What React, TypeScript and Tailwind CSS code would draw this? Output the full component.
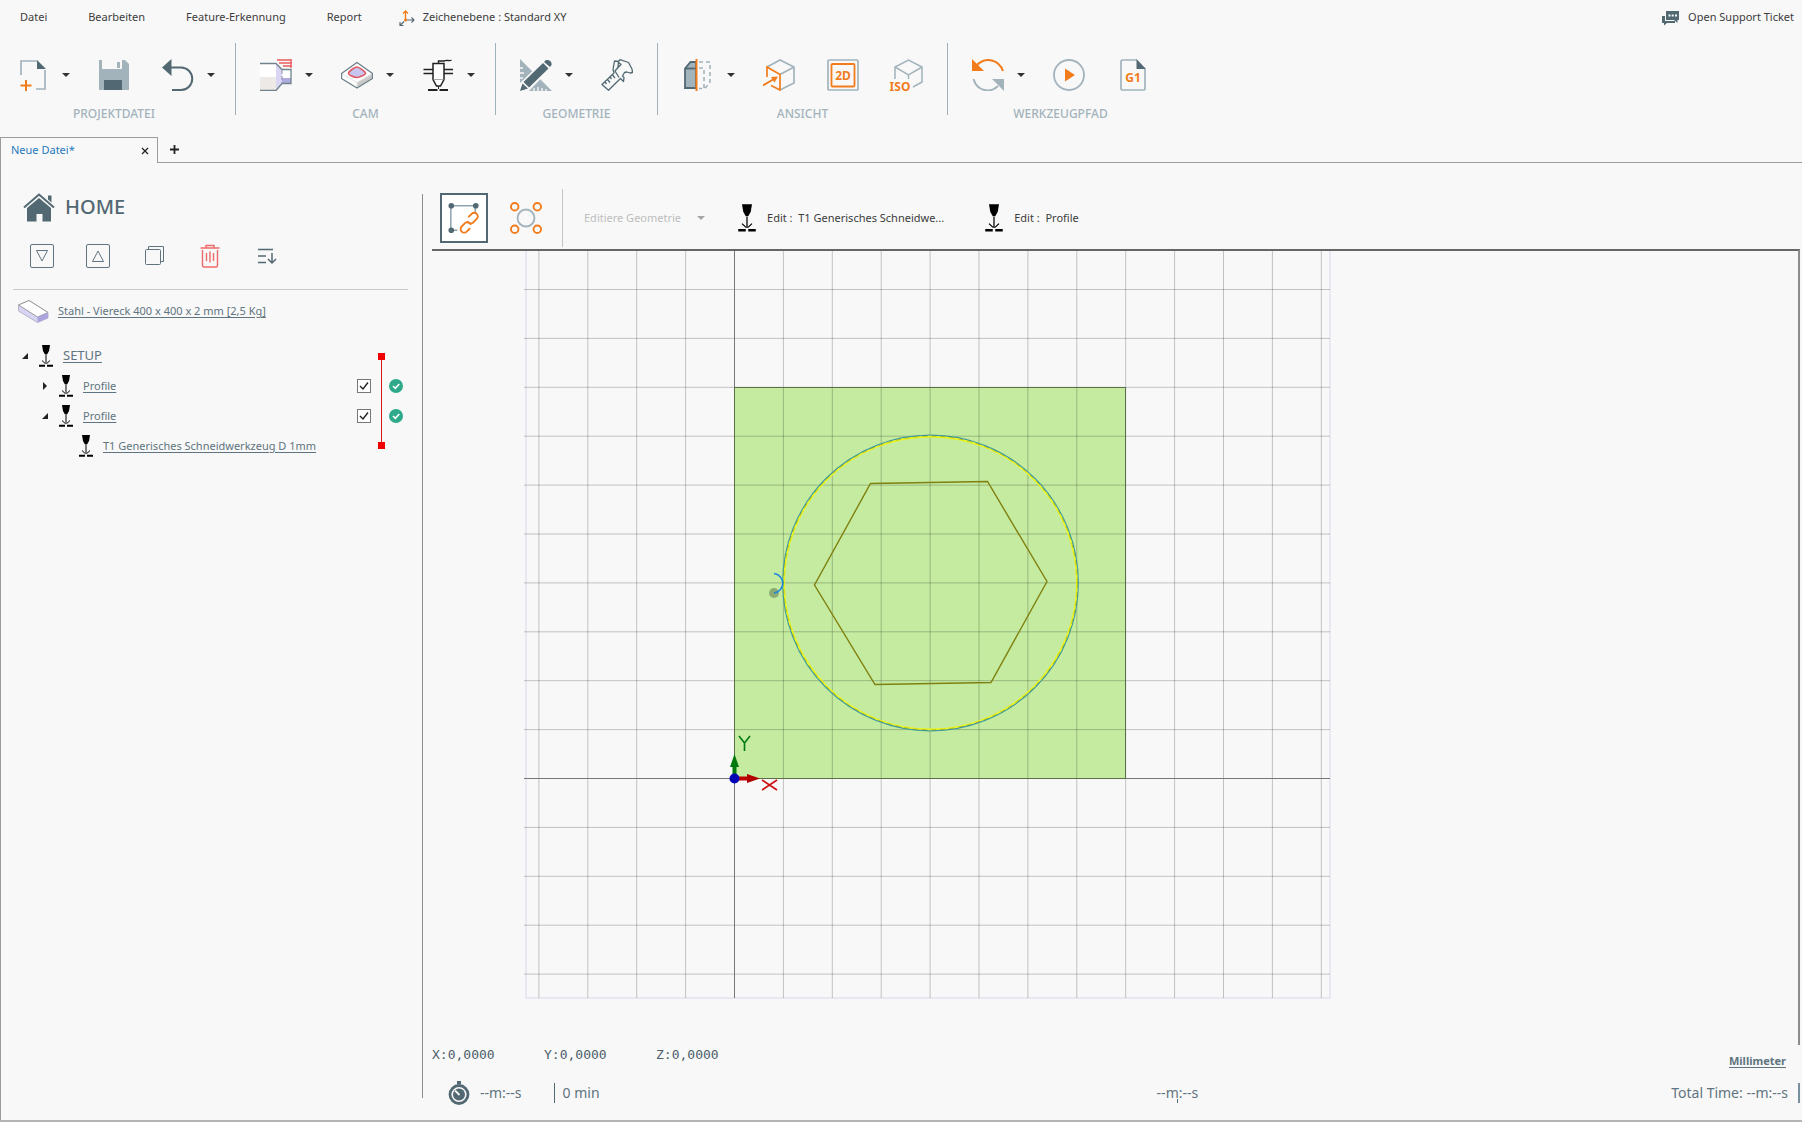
import React, { useState } from "react";

interface IconProps {
  className?: string;
}

const NewFileIcon = () => (
  <svg viewBox="0 0 32 32" className="w-8 h-8" fill="none">
    <path d="M4 16V2h16M28 11v19h-9" stroke="#a3b3bc" strokeWidth="1.7" />
    <path d="M20 1l9 9h-9z" fill="#526872" />
    <path d="M9 21v11M3.500 26.500h11" stroke="#f27c1c" strokeWidth="2" />
  </svg>
);

const SaveIcon = () => (
  <svg viewBox="0 0 32 32" className="w-8 h-8">
    <path d="M1 1h3v9h20V1h3l4 4v26H1z" fill="#a3b3bc" />
    <path d="M19 3h3v6h-3z" fill="#a3b3bc" />
    <path d="M6 21h18v10H6z" fill="#526872" />
  </svg>
);

const UndoIcon = () => (
  <svg viewBox="0 0 32 32" className="w-8 h-8" fill="none">
    <path d="M9 8.500h10a11 11 0 0 1 0 22.500h-9" stroke="#526872" strokeWidth="2" />
    <path d="M0 8.500L9.500 0v17z" fill="#526872" />
  </svg>
);

const TurnedPartIcon = () => (
  <svg viewBox="0 0 32 32" className="w-8 h-8" fill="none">
    <path d="M0 5h16v13H0z" fill="#fff" />
    <path d="M0 18h16v13H0z" fill="#ece9e6" />
    <path d="M16 5l6 6v13l-6 7z" fill="#d9d5f3" />
    <path d="M22 11h9v9h-9z" fill="#fff" />
    <path d="M22 19h9v6h-9z" fill="#aeaae0" />
    <path d="M0 4.500h16l6 6h9v14h-9l-6 7H0" stroke="#70828c" strokeWidth="1.300" />
    <path d="M22 11v14" stroke="#8c8fb5" strokeDasharray="4 2" />
    <path d="M17 1h15M19 4h13M23 7h9M31 1v8" stroke="#e8585c" strokeWidth="1.300" />
  </svg>
);

const PocketIcon = () => (
  <svg viewBox="0 0 32 32" className="w-8 h-8" fill="none" strokeLinejoin="round">
    <path d="M16 3.500l15.500 11v5L16 29 .500 19.500v-5z" fill="#fff" />
    <path d="M31 15v4.500L16 28.500v-5z" fill="#c9c9c9" />
    <path d="M16 23.500v5M.500 14.500l15.500 9 15.500-9" stroke="#e2e2e2" />
    <path d="M16 3.500l15.500 11v5L16 29 .500 19.500v-5z" stroke="#70828c" strokeWidth="1.400" />
    <path d="M16 8c2 0 8 4.500 8.500 6s-6 4.500-8.500 4.500S7 16 7.500 14 14 8 16 8z" fill="#c8c5ee" stroke="#e05a64" strokeWidth="1.600" />
  </svg>
);

const LaserHeadIcon = () => (
  <svg viewBox="0 0 32 32" className="w-8 h-8" fill="none" stroke="#222">
    <path d="M11 4.500h11v16L18.500 27h-4L11 20.500z" fill="#fff" strokeWidth="1.500" />
    <path d="M11.500 20.500h10" stroke="#aaa" />
    <path d="M16.500 4.500V2h6c3-2 4 1 7-1" strokeWidth="1.400" />
    <path d="M1.500 10.500H11M1.500 14.500H11M22 10.500h9M22 14.500h9" strokeWidth="1.300" />
    <path d="M6 31h9.500M17.500 31H26" strokeWidth="2" />
    <path d="M16.500 27v3" />
  </svg>
);

const DrawIcon = () => (
  <svg viewBox="0 0 32 32" className="w-8 h-8">
    <path d="M0 0l32 32H0z" fill="#a3b3bc" />
    <path d="M0 9h3M0 14h4M0 19h3M14 32v-3M18 32v-4M22 32v-3M26 32v-2" stroke="#f8f8f8" strokeWidth="1.300" />
    <path d="M25 0h7v8L9 32H0v-8z" fill="#f8f8f8" />
    <path d="M23 4l5.500 5.500L9 28.500 3.500 23z" fill="#526872" />
    <path d="M24.500 2.500c2-3 8-1 7 3.500l-1.500 2L24 3z" fill="#526872" />
    <path d="M2.500 24.500l5.500 5L0 32z" fill="#526872" />
  </svg>
);

const CaliperIcon = () => (
  <svg viewBox="0 0 32 32" className="w-8 h-8" fill="none" stroke="#526872" strokeWidth="1.300" strokeLinejoin="round">
    <path d="M1 25.500L13 14l-1-3.500L13.500 2l4 .500-.500 6 3-3-3-2.500L19 .700l8.500 2.800 3.500 6.500.500 3.500-2.500.500-3-1-2.500.500-2 3.500 1.500 1.500-.500 4-3-3L7.500 31.300z" />
    <path d="M17 8.500L14 12l4 6.500M4 23l1.500 2M6.500 20.500l2.500 3M9 18l1.500 2M11.500 16l2.500 3" />
  </svg>
);

const SectionIcon = () => (
  <svg viewBox="0 0 32 32" className="w-8 h-8" fill="none">
    <path d="M3 9.500L8.500 3H14v26H3z" fill="#a3b3bc" stroke="#526872" strokeWidth="1.800" />
    <path d="M3 9.500h11" stroke="#526872" strokeWidth="1.800" />
    <path d="M17 3h11v20l-5 6.500h-6M17 9h5v20" stroke="#a3b3bc" strokeWidth="1.600" strokeDasharray="4 3" />
    <path d="M14.500 0v32" stroke="#f27c1c" strokeWidth="2" />
  </svg>
);

const FrontViewIcon = () => (
  <svg viewBox="0 0 32 32" className="w-8 h-8" fill="none" strokeWidth="1.700">
    <path d="M4 8l13-7 14 7v16L17 31M17 15.500L31 8" stroke="#a3b3bc" />
    <path d="M4 18V8l13 7.500V31L8 26.500" stroke="#f27c1c" />
    <path d="M0 26.500L11 20" stroke="#f27c1c" strokeWidth="2" />
    <path d="M8 18l7-.500-3.500 6z" fill="#f27c1c" />
  </svg>
);

const View2DIcon = () => (
  <svg viewBox="0 0 32 32" className="w-8 h-8" fill="none">
    <rect x="1" y="1" width="30" height="30" rx="1" stroke="#a3b3bc" strokeWidth="1.700" />
    <rect x="4.500" y="5" width="23" height="22.500" rx="1" stroke="#f27c1c" strokeWidth="1.800" />
    <text x="16" y="20.500" textAnchor="middle" fontSize="12" fontWeight="700" fill="#f27c1c">2D</text>
  </svg>
);

const IsoIcon = () => (
  <svg viewBox="0 0 32 32" className="w-8 h-8 overflow-visible" fill="none">
    <path d="M4 20V8l13.500-7L31 8v15l-9 5M4 8l13.500 8L31 8M17.500 16v4" stroke="#a3b3bc" strokeWidth="1.500" />
    <text x="9" y="32" textAnchor="middle" fontSize="12" fontWeight="700" fill="#f27c1c">ISO</text>
  </svg>
);

const RefreshIcon = () => (
  <svg viewBox="0 0 32 32" className="w-8 h-8" fill="none">
    <path d="M5 6c9-9 22-5 26 6" stroke="#f27c1c" strokeWidth="2" />
    <path d="M0 0l12 12H0z" fill="#f27c1c" />
    <path d="M1.500 20C5 32 18 35 26 27" stroke="#a3b3bc" strokeWidth="2" />
    <path d="M32 20v12L20 20z" fill="#a3b3bc" />
  </svg>
);

const PlayIcon = () => (
  <svg viewBox="0 0 32 32" className="w-8 h-8">
    <circle cx="16" cy="16" r="15" fill="none" stroke="#a3b3bc" strokeWidth="1.800" />
    <path d="M12 9.500l10 6.500-10 6.500z" fill="#f27c1c" />
  </svg>
);

const GCodeIcon = () => (
  <svg viewBox="0 0 32 32" className="w-8 h-8" fill="none">
    <path d="M20 1H5.500a1.500 1.500 0 0 0-1.500 1.500v27A1.500 1.500 0 0 0 5.500 31h21a1.500 1.500 0 0 0 1.500-1.500V10" stroke="#a3b3bc" strokeWidth="1.700" />
    <path d="M19.500 0L29 10h-9.500z" fill="#526872" />
    <text x="16" y="23" textAnchor="middle" fontSize="12" fontWeight="700" fill="#f27c1c">G1</text>
  </svg>
);

const PlaneIcon = () => (
  <svg viewBox="0 0 16 16" className="w-4 h-4" fill="none">
    <path d="M6.500 10V1M4 3.500L6.500 1 9 3.500" stroke="#f27c1c" strokeWidth="1.400" />
    <path d="M7.500 10H15M12.500 7.500L15 10l-2.500 2.500M5 11.500L1 15.500M1 12v3.500h3.500" stroke="#526872" strokeWidth="1.100" />
    <circle cx="6.500" cy="10" r="1.500" fill="#f27c1c" />
  </svg>
);

const ChatIcon = () => (
  <svg viewBox="0 0 18 16" className="w-[18px] h-4">
    <path d="M0 6h3v5h10v2H5l-3 2.500V13H0z" fill="#526872" />
    <path d="M4 1h13v9h-1.500v3L12 10H4z" fill="#526872" />
    <path d="M6.500 4.500h2v2h-2zM9.700 4.500h2v2h-2zM13 4.500h2v2h-2z" fill="#f8f8f8" />
  </svg>
);

const HomeIcon = () => (
  <svg viewBox="0 0 32 29" className="w-8 h-[29px]">
    <path d="M16 5l12 10v13.500h-8.500V21h-6v7.500H4V15z" fill="#526872" />
    <path d="M1 14.500L16 1.500l15 13" fill="none" stroke="#526872" strokeWidth="2" />
    <path d="M25 2.500h3.500v7L25 6.500z" fill="#526872" />
  </svg>
);

const ToolIcon = ({ className = "w-4 h-[22px]" }: IconProps) => (
  <svg viewBox="0 0 16 22" className={className} fill="none" stroke="#000">
    <path d="M4 0h8l-1 6-2 3.500H7L5 6z" fill="#000" stroke="none" />
    <path d="M8 10v9M7.200 18.500L4 15.500M8.800 18.500l3.200-3" strokeWidth="1" />
    <path d="M1 20.800h6M9 20.800h6" strokeWidth="2" />
  </svg>
);

const SheetIcon = () => (
  <svg viewBox="0 0 32 24" className="w-8 h-6" strokeLinejoin="round">
    <path d="M1.500 6L12 1.500 31 13.500v5.500l-10.500 4.500L1.500 12z" fill="#d8d5f4" stroke="#b5b4cc" />
    <path d="M1.500 6L12 1.500 31 13.500 20.500 18z" fill="#fff" stroke="#999" />
    <path d="M20.500 18L31 13.500V19l-10.500 4.500z" fill="#aaa6dd" />
  </svg>
);

const OutlineSelectIcon = () => (
  <svg viewBox="0 0 34 34" className="w-8 h-8" fill="none">
    <path d="M3 30V4h26v7M3 30h7" stroke="#8ea3ae" strokeWidth="1.600" />
    <circle cx="3.500" cy="4" r="3" fill="#526872" />
    <circle cx="29.500" cy="4" r="3" fill="#526872" />
    <circle cx="3.500" cy="30" r="3" fill="#526872" />
    <g stroke="#f27c1c" strokeWidth="2" strokeLinecap="round">
      <path d="M21 21a4 4 0 0 0 5.500 1l4-4a3.800 3.800 0 0 0-5.400-5.400l-3 3" />
      <path d="M24 23.500a4 4 0 0 0-5.500-1.500l-4 4a3.800 3.800 0 0 0 5.400 5.400l3-3" />
    </g>
  </svg>
);

const PatternIcon = () => (
  <svg viewBox="0 0 34 34" className="w-8 h-8" fill="none" strokeWidth="2">
    <circle cx="17" cy="17" r="9" stroke="#a3b3bc" />
    <g stroke="#f27c1c">
      <circle cx="5" cy="5" r="4" />
      <circle cx="29" cy="5" r="4" />
      <circle cx="5" cy="29" r="4" />
      <circle cx="29" cy="29" r="4" />
    </g>
  </svg>
);

const StopwatchIcon = () => (
  <svg viewBox="0 0 22 24" className="w-[22px] h-6" fill="none">
    <path d="M9 0h4v3H9z" fill="#526872" />
    <circle cx="11" cy="13.500" r="9" stroke="#526872" strokeWidth="2.800" />
    <circle cx="11" cy="13.500" r="6" fill="#526872" />
    <path d="M7 9.500l4.500 4.500" stroke="#f8f8f8" strokeWidth="1.800" />
  </svg>
);

const Caret = ({ className = "text-[#333]" }: IconProps) => (
  <svg viewBox="0 0 8 4" className={`w-2 h-1 ${className}`}>
    <path d="M0 0h8L4 4z" fill="currentColor" />
  </svg>
);

interface Tool {
  name: string;
  icon: React.ReactNode;
  menu?: boolean;
}

interface ToolGroup {
  title: string;
  tools: Tool[];
}

const toolGroups: ToolGroup[] = [
  {
    title: "PROJEKTDATEI",
    tools: [
      { name: "Neu", icon: <NewFileIcon />, menu: true },
      { name: "Speichern", icon: <SaveIcon /> },
      { name: "Rückgängig", icon: <UndoIcon />, menu: true },
    ],
  },
  {
    title: "CAM",
    tools: [
      { name: "Drehen", icon: <TurnedPartIcon />, menu: true },
      { name: "Fräsen", icon: <PocketIcon />, menu: true },
      { name: "Schneiden", icon: <LaserHeadIcon />, menu: true },
    ],
  },
  {
    title: "GEOMETRIE",
    tools: [
      { name: "Zeichnen", icon: <DrawIcon />, menu: true },
      { name: "Messen", icon: <CaliperIcon /> },
    ],
  },
  {
    title: "ANSICHT",
    tools: [
      { name: "Schnitt", icon: <SectionIcon />, menu: true },
      { name: "Vorderansicht", icon: <FrontViewIcon /> },
      { name: "2D-Ansicht", icon: <View2DIcon /> },
      { name: "ISO-Ansicht", icon: <IsoIcon /> },
    ],
  },
  {
    title: "WERKZEUGPFAD",
    tools: [
      { name: "Neu berechnen", icon: <RefreshIcon />, menu: true },
      { name: "Simulation", icon: <PlayIcon /> },
      { name: "G-Code", icon: <GCodeIcon /> },
    ],
  },
];

const MenuBar = () => (
  <nav className="flex items-center gap-px h-[35px] pr-2 text-[11px] text-[#3c3c3c]">
    {["Datei", "Bearbeiten", "Feature-Erkennung", "Report"].map((item) => (
      <button key={item} type="button" className="px-5">{item}</button>
    ))}
    <button type="button" className="flex items-center gap-2 pl-4">
      <PlaneIcon />
      Zeichenebene : Standard XY
    </button>
    <a href="#support" className="flex items-center gap-2 ml-auto">
      <ChatIcon />
      Open Support Ticket
    </a>
  </nav>
);

const Ribbon = () => (
  <div className="flex pl-px pt-2 h-[102px]">
    {toolGroups.map((group, i) => (
      <React.Fragment key={group.title}>
        {i > 0 && <div className="w-px h-[72px] mx-2 bg-[#9fb1bb]" />}
        <section className="flex flex-col items-center">
          <div className="flex h-[63px] items-center">
            {group.tools.map((tool) => (
              <div key={tool.name} className="flex items-center">
                <button type="button" aria-label={tool.name} className={tool.menu ? "pl-4" : "px-4"}>
                  {tool.icon}
                </button>
                {tool.menu && (
                  <button type="button" aria-label={`${tool.name} Menü`} className="mx-2 w-[17px] h-8 flex items-center justify-center">
                    <Caret />
                  </button>
                )}
              </div>
            ))}
          </div>
          <h2 className="text-xs leading-4 text-[#a3b3bc] font-medium">{group.title}</h2>
        </section>
      </React.Fragment>
    ))}
  </div>
);

const TabStrip = () => (
  <div className="flex h-[26px]">
    <div className="flex items-center justify-between w-[158px] pl-2.5 pr-2 border-t border-r border-l border-[#9c9c9c] text-[11px]">
      <button type="button" className="text-[#1f78bd]">Neue Datei*</button>
      <button type="button" aria-label="Schließen" className="text-[#222]">
        <svg viewBox="0 0 8 8" className="w-2 h-2"><path d="M1 1l6 6M7 1L1 7" stroke="currentColor" strokeWidth="1.300" /></svg>
      </button>
    </div>
    <div className="flex-1 flex items-center pl-3 border-b border-[#9c9c9c]">
      <button type="button" aria-label="Neuer Tab" className="text-[#222]">
        <svg viewBox="0 0 9 9" className="w-[9px] h-[9px]"><path d="M4.500 0v9M0 4.500h9" stroke="currentColor" strokeWidth="1.800" /></svg>
      </button>
    </div>
  </div>
);

interface TreeRow {
  id: string;
  label: string;
  level: number;
  open?: boolean;
  checkable?: boolean;
}

const rows: TreeRow[] = [
  { id: "setup", label: "SETUP", level: 0, open: true },
  { id: "profile-1", label: "Profile", level: 1, open: false, checkable: true },
  { id: "profile-2", label: "Profile", level: 1, open: true, checkable: true },
  { id: "tool-1", label: "T1 Generisches Schneidwerkzeug D 1mm", level: 2 },
];

const indents = ["pl-5", "pl-10", "pl-[60px]"];

const Tree = () => {
  const [checked, setChecked] = useState<Record<string, boolean>>({ "profile-1": true, "profile-2": true });

  return (
    <div className="relative mt-[18px]">
      <ul className="text-[11px] text-[#5f7480]">
        {rows.map((row) => (
          <li key={row.id} className={`flex items-center h-[30px] pr-[5px] ${indents[row.level]}`}>
            <span className="w-[17px] shrink-0">
              {row.open !== undefined && (
                <button type="button" aria-label={row.open ? "Zuklappen" : "Aufklappen"} className="block">
                  <svg viewBox="0 0 8 8" className="w-2 h-2">
                    <path d={row.open ? "M7 1v6H1z" : "M2 0l4 4-4 4z"} fill="#222" />
                  </svg>
                </button>
              )}
            </span>
            <ToolIcon />
            <a href={`#${row.id}`} className={`ml-[9px] underline underline-offset-2 ${row.level === 0 ? "text-[13px]" : ""}`}>
              {row.label}
            </a>
            {row.checkable && (
              <span className="ml-auto flex items-center">
                <input
                  type="checkbox"
                  id={`${row.id}-active`}
                  aria-label={row.label}
                  checked={checked[row.id]}
                  onChange={(e) => setChecked({ ...checked, [row.id]: e.target.checked })}
                  className="peer appearance-none w-3.5 h-3.5 border border-[#777] bg-white"
                />
                <svg viewBox="0 0 14 14" className="w-3.5 h-3.5 -ml-3.5 pointer-events-none invisible peer-checked:visible">
                  <path d="M3 7l3 3 5-6.500" fill="none" stroke="#222" strokeWidth="1.400" />
                </svg>
                <svg viewBox="0 0 14 14" className="w-3.5 h-3.5 ml-[18px]">
                  <circle cx="7" cy="7" r="7" fill="#2eaa8b" />
                  <path d="M4 7l2.300 2.300L10.300 5" fill="none" stroke="#fff" strokeWidth="1.600" />
                </svg>
              </span>
            )}
          </li>
        ))}
      </ul>
      <div className="absolute right-[23px] top-3 bottom-3 w-[7px] flex flex-col items-center">
        <span className="w-[7px] h-[7px] bg-[#f00000]" />
        <span className="w-px flex-1 bg-[#d81818]" />
        <span className="w-[7px] h-[7px] bg-[#f00000]" />
      </div>
    </div>
  );
};

const Sidebar = () => (
  <aside className="w-[422px] shrink-0 pt-7 pr-[14px] border-l border-[#9c9c9c]">
    <div className="flex items-center gap-2.5 pl-[22px] h-8">
      <HomeIcon />
      <h1 className="text-xl leading-7 font-medium text-[#526872]">HOME</h1>
    </div>

    <div className="flex items-center gap-8 pl-[29px] mt-[21px]">
      <button type="button" aria-label="Alle zuklappen">
        <svg viewBox="0 0 24 24" className="w-6 h-6" fill="none" stroke="#60747f">
          <rect x=".500" y=".500" width="23" height="23" rx="1.500" />
          <path d="M6.500 6.500h11L12 17z" />
        </svg>
      </button>
      <button type="button" aria-label="Alle aufklappen">
        <svg viewBox="0 0 24 24" className="w-6 h-6" fill="none" stroke="#60747f">
          <rect x=".500" y=".500" width="23" height="23" rx="1.500" />
          <path d="M6.500 17.500h11L12 7z" />
        </svg>
      </button>
      <button type="button" aria-label="Kopieren">
        <svg viewBox="0 0 24 24" className="w-6 h-6" fill="none" stroke="#60747f">
          <rect x="3.500" y="5.500" width="15" height="15" rx="1" />
          <path d="M6.500 5.500v-3h15v15h-3" />
        </svg>
      </button>
      <button type="button" aria-label="Löschen">
        <svg viewBox="0 0 24 24" className="w-6 h-6" fill="none" stroke="#ee6a6a" strokeWidth="1.400">
          <path d="M2.500 4h19M8 4V1.500h8V4M4.500 6v15.500a1.500 1.500 0 0 0 1.500 1.500h12a1.500 1.500 0 0 0 1.500-1.500V6M8.500 9v8M12 7.500v11M15.500 9v8" />
        </svg>
      </button>
      <button type="button" aria-label="Sortieren">
        <svg viewBox="0 0 24 24" className="w-6 h-6" fill="none" stroke="#526872" strokeWidth="1.500">
          <path d="M4 5.500h15M4 12h8M4 18.500h8M18 9v10M14 15l4 4 4-4" />
        </svg>
      </button>
    </div>

    <div className="ml-3 mt-[21px] border-t border-[#c9c9c9]" />
    <div className="flex items-center pl-4 mt-[9px] gap-[9px] text-[11px] text-[#5f7480]">
      <SheetIcon />
      <a href="#material" className="underline underline-offset-2">Stahl - Viereck 400 x 400 x 2 mm [2,5 Kg]</a>
    </div>

    <Tree />
  </aside>
);

// one grid cell equals 50 mm
const CELL = 48.9;
const ORIGIN_X = 301.5;
const ORIGIN_Y = 526.5;

const vLines = Array.from({ length: 17 }, (_, i) => i - 4);
const hLines = Array.from({ length: 15 }, (_, i) => i - 4);

const Drawing = () => (
  <svg className="block w-full flex-1 min-h-[750px]" role="img" aria-label="Zeichenfläche">
    <g transform="translate(1 1)">
      <path d="M93 -1v747h804V-1" fill="none" stroke="#e8e8f4" strokeWidth="2" />
      <rect x={ORIGIN_X} y={ORIGIN_Y - 8 * CELL} width={8 * CELL} height={8 * CELL} fill="#c4eba0" />
      <g stroke="#000" strokeOpacity=".22">
        {vLines.map((k) => (
          <line key={k} x1={ORIGIN_X + k * CELL} x2={ORIGIN_X + k * CELL} y1="-1" y2="746" />
        ))}
        {hLines.map((k) => (
          <line key={k} x1="91" x2="897" y1={ORIGIN_Y - k * CELL} y2={ORIGIN_Y - k * CELL} />
        ))}
      </g>
      <g stroke="#777" shapeRendering="crispEdges">
        <line x1={ORIGIN_X} x2={ORIGIN_X} y1="-1" y2="746" />
        <line x1="91" x2="897" y1={ORIGIN_Y} y2={ORIGIN_Y} />
      </g>
      <rect x={ORIGIN_X} y={ORIGIN_Y - 8 * CELL} width={8 * CELL} height={8 * CELL} fill="none" stroke="#5b7048" shapeRendering="crispEdges" />
      <circle cx="497.500" cy="331" r="147.800" fill="none" stroke="#3d9aa0" strokeWidth="1.200" />
      <circle cx="497.500" cy="331" r="146.400" fill="none" stroke="#ecf41a" strokeWidth="1.600" />
      <circle cx="497.500" cy="331" r="146.900" fill="none" stroke="#7a8c14" strokeWidth=".500" strokeDasharray="5 4" />
      <path d="M437.500 231.500l117-2 59.500 100L558 430.500l-116 2L381.500 333z" fill="none" stroke="#808010" strokeWidth="1.400" />
      <circle cx="341" cy="341" r="5" fill="#8bab73" />
      <path d="M341 321.500a9.800 9.800 0 0 1 0 19.500" fill="none" stroke="#2088dc" strokeWidth="1.600" />
      <path d="M301.500 526V514" stroke="#007a10" strokeWidth="4" />
      <path d="M297 515l4.500-13 4.500 13z" fill="#007a10" />
      <path d="M302 526.500h13" stroke="#c00000" strokeWidth="4" />
      <path d="M314 522l13 4.500-13 4.500z" fill="#b00000" />
      <circle cx="301.500" cy="526.500" r="5" fill="#0000b4" />
      <path d="M306 484l5.500 7 5.500-7M311.500 491v8" fill="none" stroke="#007a10" strokeWidth="1.600" />
      <path d="M329 528l15 10M344 528l-15 10" stroke="#cc1010" strokeWidth="1.600" />
    </g>
  </svg>
);

const CanvasToolbar = () => (
  <div className="flex items-center h-[62px] pl-2 text-[11px] text-[#3c3c3c]">
    <button type="button" aria-label="Kontur wählen" className="w-12 h-[50px] flex items-center justify-center bg-white border-2 border-[#526872]">
      <OutlineSelectIcon />
    </button>
    <button type="button" aria-label="Muster wählen" className="w-8 ml-[22px]"><PatternIcon /></button>
    <div className="w-px h-[58px] ml-5 mr-[21px] bg-[#c4c4c4]" />
    <button type="button" disabled className="flex items-center gap-4 text-[#bdbdbd]">
      Editiere Geometrie
      <Caret className="text-[#a5a5a5]" />
    </button>
    <button type="button" className="flex items-center gap-2.5 ml-8">
      <ToolIcon className="w-5 h-7" />
      Edit :&nbsp; T1 Generisches Schneidwe...
    </button>
    <button type="button" className="flex items-center gap-2.5 ml-10">
      <ToolIcon className="w-5 h-7" />
      Edit :&nbsp; Profile
    </button>
  </div>
);

const StatusBar = () => (
  <footer className="text-[#5f7480]">
    <div className="flex items-start h-6 pr-3.5">
      <div className="flex leading-5 font-['DejaVu_Sans_Mono',monospace] text-[13px] text-[#4c606b]">
        <span className="w-28">X:0,0000</span>
        <span className="w-28">Y:0,0000</span>
        <span className="w-28">Z:0,0000</span>
      </div>
      <a href="#units" className="ml-auto self-end text-[11px] leading-4 font-bold underline underline-offset-2">Millimeter</a>
    </div>
    <div className="flex items-center h-[51px] pb-1 pl-4 text-sm">
      <StopwatchIcon />
      <span className="ml-2.5">--m:--s</span>
      <span className="w-px h-5 ml-8 bg-[#526872]" />
      <span className="ml-2">0 min</span>
      <div className="mx-auto pl-[84px]">
        <span className="relative">
          --m:--s
          <span className="absolute left-1/2 top-4 w-px h-1 bg-[#526872]" />
        </span>
      </div>
      <span>Total Time: --m:--s</span>
      <span className="w-0.5 h-5 ml-2.5 bg-[#78909c]" />
    </div>
  </footer>
);

export default function App() {
  return (
    <div className="min-h-screen flex flex-col bg-[#f8f8f8] border-b-2 border-[#b4b4b4] font-['Noto_Sans','Open_Sans',sans-serif]">
      <header>
        <MenuBar />
        <Ribbon />
        <TabStrip />
      </header>
      <div className="flex-1 flex">
        <Sidebar />
        <div className="w-px shrink-0 mt-[31px] mb-[22px] bg-[#8f8f8f]" />
        <main className="flex-1 min-w-0 flex flex-col pt-6 pl-[9px] pr-0.5">
          <CanvasToolbar />
          <div className="flex-1 flex flex-col border-t-2 border-r-2 border-t-[#666] border-r-[#8c8c8c]">
            <Drawing />
          </div>
          <StatusBar />
        </main>
      </div>
    </div>
  );
}
